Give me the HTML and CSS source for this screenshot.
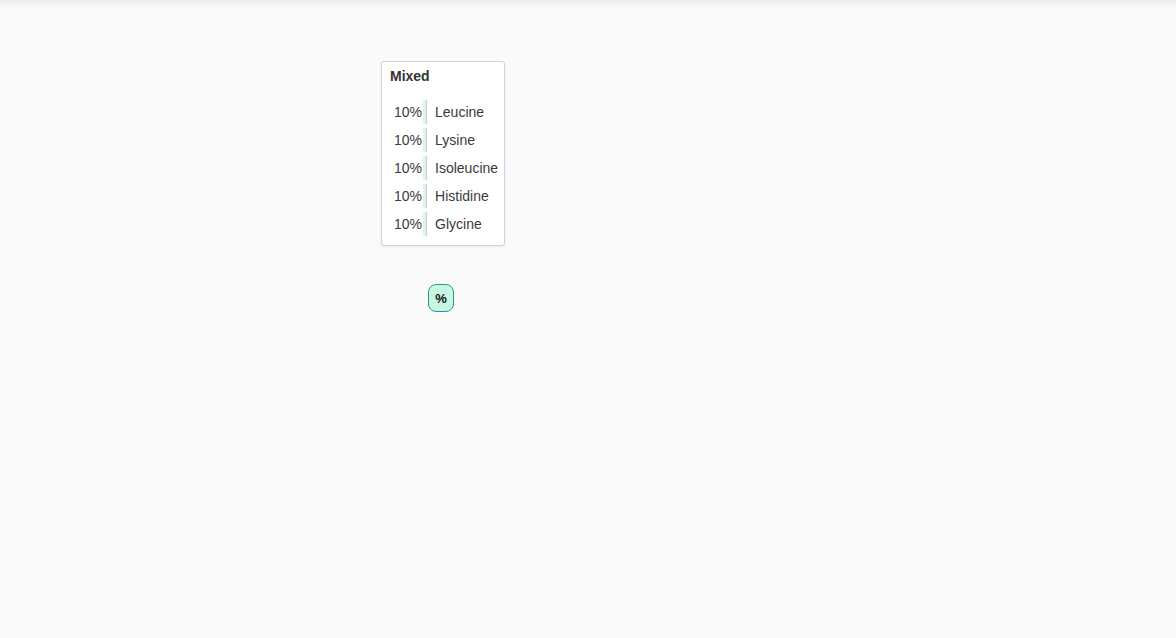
FILE: index.html
```html
<!DOCTYPE html>
<html>
<head>
<meta charset="utf-8">
<link rel="stylesheet" href="styles.css">
</head>
<body>
<div class="topbar"></div>
<div class="canvas">
  <div class="node card">
    <div class="title">Mixed</div>
    <table class="rows">
      <tr><td class="pct">10%</td><td class="bar"><span class="fill" style="width:3px"></span></td><td class="name">Leucine</td></tr>
      <tr><td class="pct">10%</td><td class="bar"><span class="fill" style="width:3px"></span></td><td class="name">Lysine</td></tr>
      <tr><td class="pct">10%</td><td class="bar"><span class="fill" style="width:3px"></span></td><td class="name">Isoleucine</td></tr>
      <tr><td class="pct">10%</td><td class="bar"><span class="fill" style="width:3px"></span></td><td class="name">Histidine</td></tr>
      <tr><td class="pct">10%</td><td class="bar"><span class="fill" style="width:3px"></span></td><td class="name">Glycine</td></tr>
    </table>
  </div>
  <div class="node badge">%</div>
</div>
</body>
</html>
```
FILE: styles.css
```css
html, body {
  margin: 0;
  padding: 0;
  height: 100%;
  background: #fafafa;
  font-family: "Liberation Sans", Arial, sans-serif;
  color: #333;
  overflow: hidden;
}
.topbar {
  height: 0;
  box-shadow: 0 0 6px 2px rgba(60, 60, 110, 0.16);
  position: relative;
  z-index: 2;
}
.canvas {
  position: relative;
  height: 638px;
}
.node {
  position: absolute;
}
.card {
  left: 381px;
  top: 61px;
  background: #fff;
  border: 1px solid #cdd4de;
  border-radius: 3px;
  box-shadow: 0 1px 2px rgba(0, 0, 0, 0.08);
  padding: 6px 6px 5px 8px;
}
.title {
  font-weight: bold;
  font-size: 14px;
  line-height: 16px;
  color: #333;
}
.rows {
  margin-top: 12px;
  border-collapse: separate;
  border-spacing: 0 4px;
  font-size: 14px;
  color: #3a3a3a;
}
.rows td {
  padding: 0;
  height: 24px;
  line-height: 16px;
  vertical-align: middle;
}
.pct {
  padding: 0 1px 0 4px !important;
  text-align: right;
}
.bar {
  width: 3px;
  border-right: 1px solid #c4cce0;
}
.fill {
  display: block;
  height: 24px;
  background: #e2f3e6;
}
.name {
  padding-left: 8px !important;
  white-space: nowrap;
}
.badge {
  left: 428px;
  top: 284px;
  width: 26px;
  height: 28px;
  box-sizing: border-box;
  border: 1px solid #1f9a98;
  border-radius: 8px;
  background: #c9f6e2;
  display: flex;
  align-items: center;
  justify-content: center;
  font-weight: bold;
  font-size: 13px;
  color: #111;
}
```
